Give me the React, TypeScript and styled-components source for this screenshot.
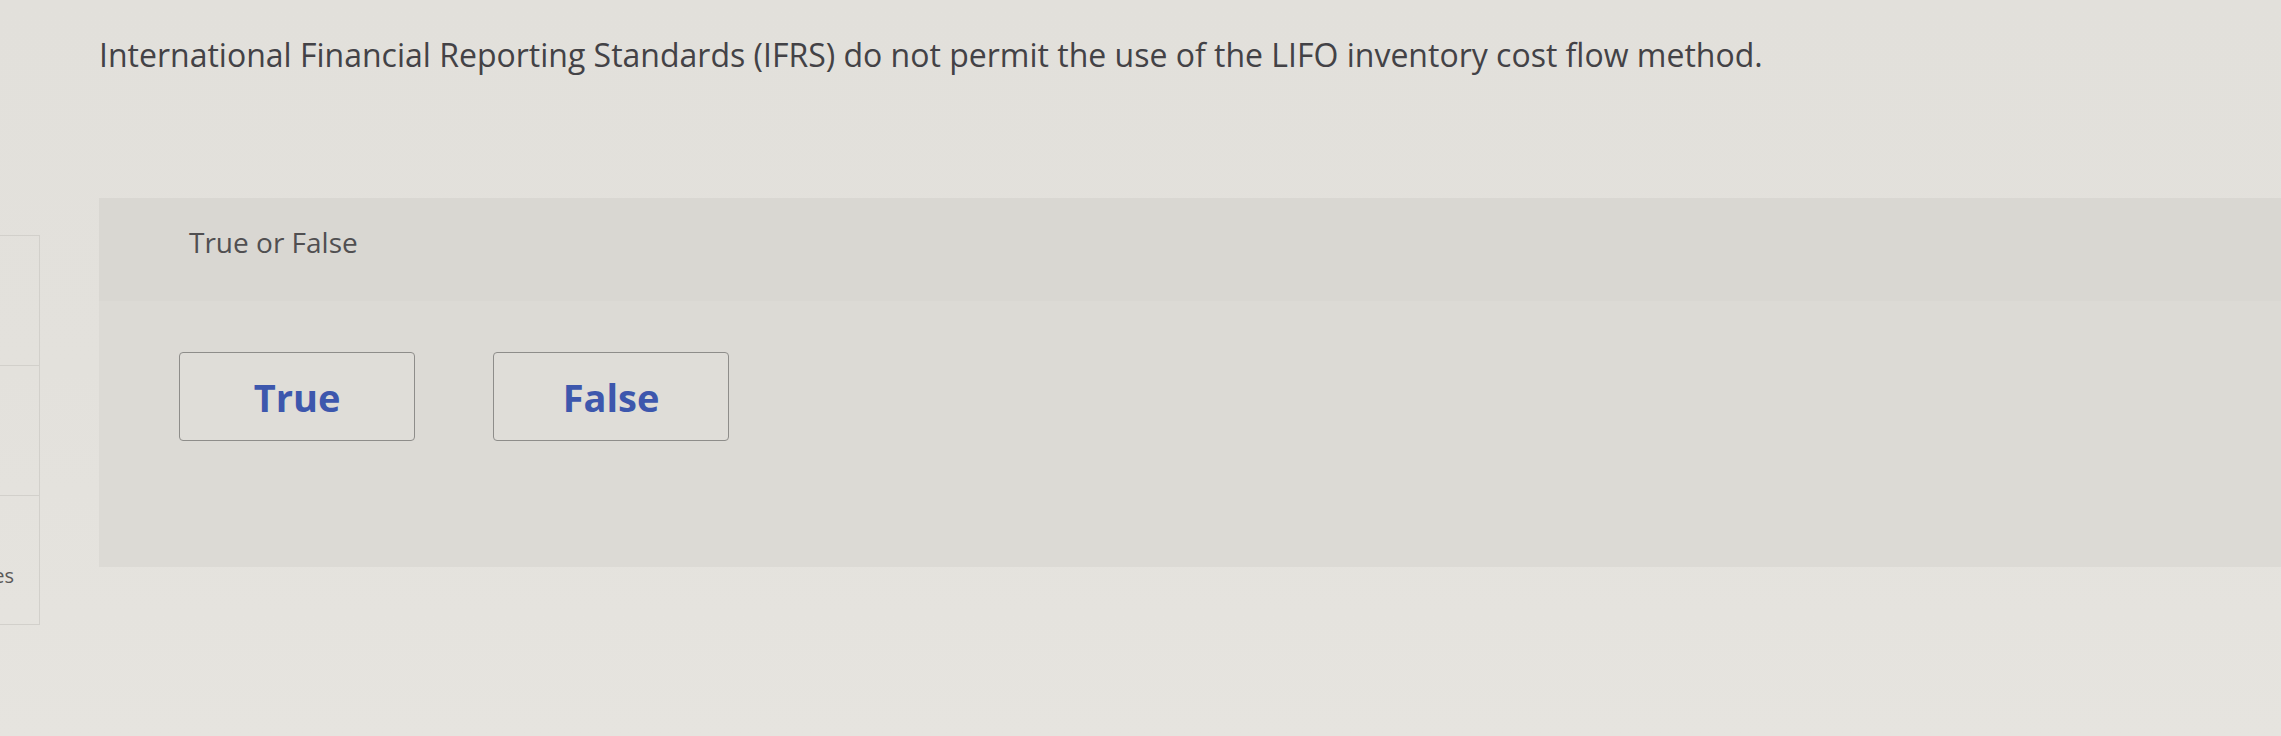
import React from 'react'
import styled, { createGlobalStyle } from 'styled-components'

const GlobalStyle = createGlobalStyle`
  html, body {
    margin: 0;
    padding: 0;
    background: #e3e1dc;
    font-family: 'Open Sans', 'Liberation Sans', sans-serif;
  }
`

const Page = styled.div`
  display: flex;
  width: 2281px;
  height: 736px;
  overflow: hidden;
  background: linear-gradient(180deg, #e2e0db 0%, #e3e1dc 50%, #e6e4df 100%);
`

const Sidebar = styled.nav`
  display: flex;
  flex-direction: column;
  width: 40px;
  flex-shrink: 0;
  padding-top: 235px;
`

const SideItem = styled.div`
  display: flex;
  justify-content: flex-end;
  align-items: flex-end;
  box-sizing: border-box;
  height: 130px;
  padding: 0 25px 36px 0;
  border-top: 1px solid #d2d0cb;
  border-right: 1px solid #d2d0cb;
  overflow: hidden;
  white-space: nowrap;
  font-size: 20px;
  line-height: 24px;
  color: #5a5958;

  &:last-child {
    border-bottom: 1px solid #d2d0cb;
  }
`

const Main = styled.main`
  flex: 1;
  padding-left: 59px;
  min-width: 0;
`

const Question = styled.p`
  margin: 33px 0 0;
  font-size: 32px;
  line-height: 44px;
  color: #434246;
  white-space: nowrap;
`

const Panel = styled.section`
  margin-top: 121px;
  height: 369px;
  background: #dcdad5;
`

const PanelHeader = styled.div`
  height: 103px;
  padding: 25px 0 0 90px;
  box-sizing: border-box;
  background: #d9d7d2;
`

const Prompt = styled.span`
  font-size: 28px;
  line-height: 38px;
  color: #504f51;
`

const Choices = styled.div`
  display: flex;
  gap: 78px;
  padding: 51px 0 0 80px;
`

const Choice = styled.button`
  display: flex;
  align-items: center;
  justify-content: center;
  width: 236px;
  height: 89px;
  padding: 0;
  background: #dfddd8;
  border: 1.5px solid #8e8d8a;
  border-radius: 4px;
  font-family: 'Open Sans', 'Liberation Sans', sans-serif;
  font-size: 38px;
  font-weight: 700;
  color: #3d57ad;
  cursor: pointer;
`

const sideItems = ['Notes', 'Notes', 'Notes']

export default function App() {
  return (
    <>
      <GlobalStyle />
      <Page>
        <Sidebar>
          {sideItems.map((label, i) => (
            <SideItem key={i}>{i === sideItems.length - 1 ? label : ''}</SideItem>
          ))}
        </Sidebar>
        <Main>
          <Question>
            International Financial Reporting Standards (IFRS) do not permit the use of the LIFO
            inventory cost flow method.
          </Question>
          <Panel>
            <PanelHeader>
              <Prompt>True or False</Prompt>
            </PanelHeader>
            <Choices>
              <Choice type="button">True</Choice>
              <Choice type="button">False</Choice>
            </Choices>
          </Panel>
        </Main>
      </Page>
    </>
  )
}
